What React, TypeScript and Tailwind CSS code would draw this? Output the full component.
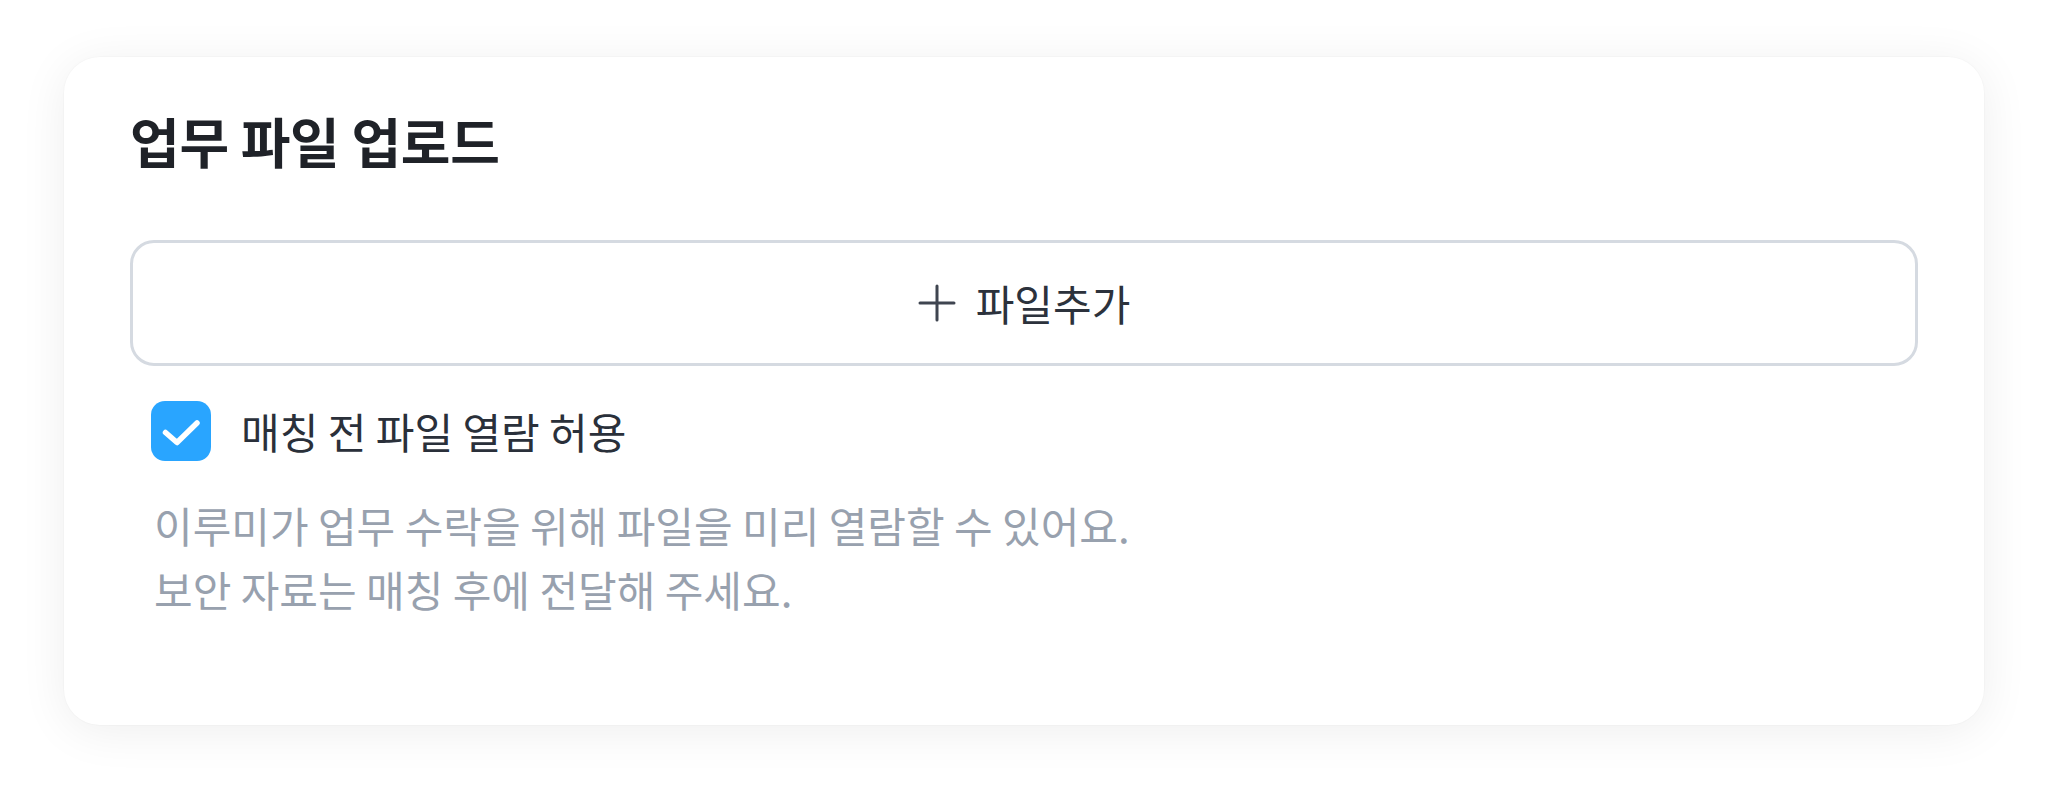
import React from "react";

export default function App() {
  const font = { fontFamily: '"Noto Sans CJK KR", "Noto Sans", sans-serif' };
  return (
    <div className="min-h-[797px] w-full bg-white px-16 pt-[57px]" style={font}>
      <div className="flex flex-col rounded-[36px] bg-white px-[66px] pt-[52px] pb-[104px] shadow-[0_6px_48px_rgba(0,0,0,0.07),0_0_0_1px_rgba(0,0,0,0.015)]">
        <h1 className="text-[54px] leading-[64px] font-bold tracking-[-0.3px] text-[#1f2228]">
          업무 파일 업로드
        </h1>

        <button
          type="button"
          className="mt-[67px] flex h-[126px] w-full items-center justify-center gap-[20px] rounded-[24px] border-[3px] border-[#d5dae1] bg-white"
        >
          <svg width="38" height="38" viewBox="0 0 38 38" fill="none">
            <path d="M19 2V36M2 19H36" stroke="#3f4550" strokeWidth="3" strokeLinecap="round" />
          </svg>
          <span className="text-[42px] leading-[48px] font-normal text-[#2c323c]">파일추가</span>
        </button>

        <div className="mt-[35px] flex items-center gap-[30px] pl-[21px]">
          <div className="flex h-[60px] w-[60px] items-center justify-center rounded-[14px] bg-[#29a5ff]">
            <svg width="60" height="60" viewBox="0 0 60 60" fill="none">
              <path d="M14.5 31.5L26 41.5L46 22" stroke="white" strokeWidth="5.5" strokeLinecap="round" strokeLinejoin="round" />
            </svg>
          </div>
          <span className="text-[42px] leading-[60px] font-normal text-[#2a303a]">매칭 전 파일 열람 허용</span>
        </div>

        <p className="mt-[32px] pl-[24px] text-[42px] leading-[64px] text-[#98a1ae]">
          이루미가 업무 수락을 위해 파일을 미리 열람할 수 있어요.
          <br />
          보안 자료는 매칭 후에 전달해 주세요.
        </p>
      </div>
    </div>
  );
}
